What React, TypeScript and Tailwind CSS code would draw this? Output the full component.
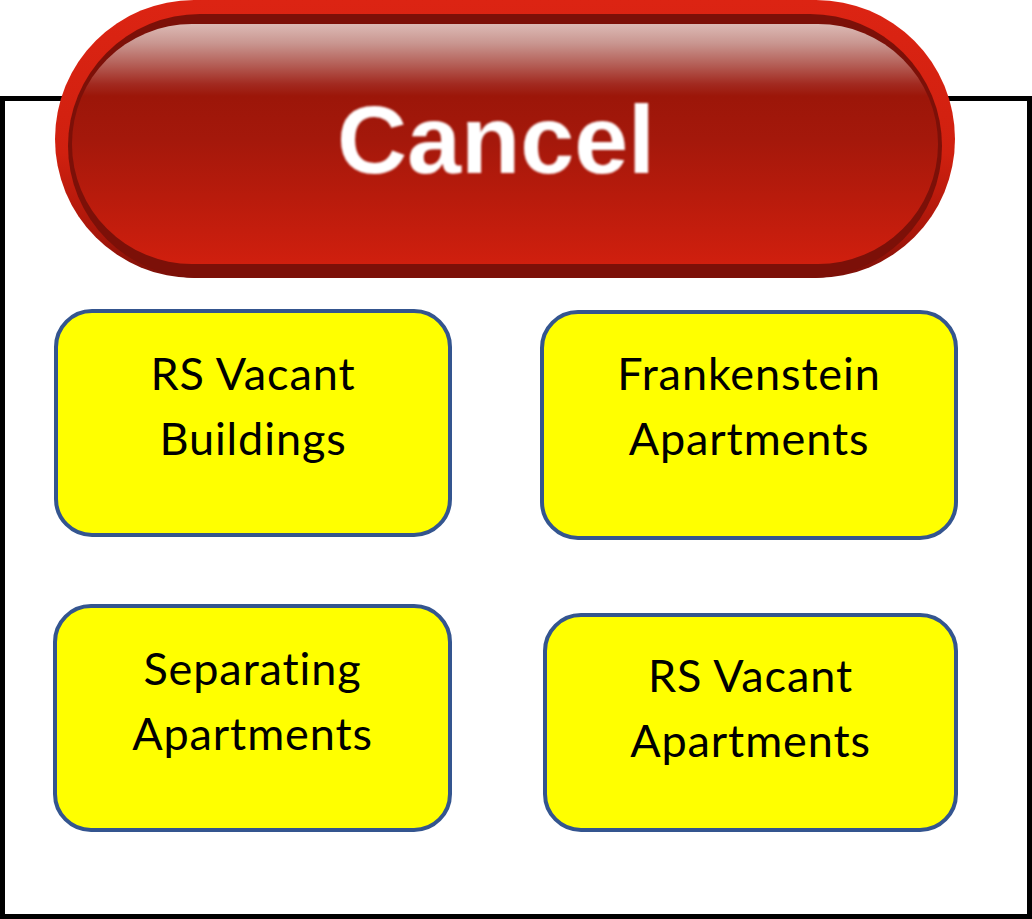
import React from "react";

function Tile({
  lines,
  className,
}: {
  lines: [string, string];
  className: string;
}) {
  return (
    <div
      className={`shrink-0 rounded-[38px] border-[4px] border-[#34558f] bg-[#ffff00] text-center text-black text-[45px] leading-[65px] tracking-[0.9px] [font-variant-ligatures:none] ${className}`}
      style={{ fontFamily: "Lato, 'Open Sans', sans-serif" }}
    >
      <div>{lines[0]}</div>
      <div>{lines[1]}</div>
    </div>
  );
}

export default function App() {
  return (
    <div className="w-[1032px] h-[919px] bg-white overflow-hidden">
      <div className="mt-[96px] h-[823px] border-[5px] border-black">
        {/* Cancel button */}
        <div className="relative z-10 -mt-[101px] ml-[50px] w-[900px] h-[278px] rounded-full bg-[linear-gradient(to_bottom,#dc2413_0%,#d0200f_55%,#a8160a_85%,#7a1008_100%)] pt-[14px] px-[13px]">
          <div className="h-[264px] rounded-full bg-[#7c1008] pt-[10px] pb-[14px] px-[4px]">
            <div className="h-full rounded-full bg-[linear-gradient(to_bottom,#dcbab5_0%,#c99690_8%,#b45e56_17%,#a22a20_25%,#9c1609_30%,#a4180b_48%,#b81b0c_72%,#d01f0e_100%)] flex items-center justify-center pr-[18px] pb-[10px]">
              <span
                className="text-white font-bold text-[97px] leading-none blur-[1px]"
                style={{ fontFamily: "'Liberation Sans', Arial, sans-serif" }}
              >
                Cancel
              </span>
            </div>
          </div>
        </div>

        {/* Row 1 */}
        <div className="mt-[31px] flex items-start">
          <Tile
            lines={["RS Vacant", "Buildings"]}
            className="ml-[49px] w-[398px] h-[228px] pt-[28px]"
          />
          <Tile
            lines={["Frankenstein", "Apartments"]}
            className="ml-[88px] mt-[1px] w-[418px] h-[230px] pt-[27px]"
          />
        </div>

        {/* Row 2 */}
        <div className="mt-[64px] flex items-start">
          <Tile
            lines={["Separating", "Apartments"]}
            className="ml-[48px] w-[399px] h-[228px] pt-[28px]"
          />
          <Tile
            lines={["RS Vacant", "Apartments"]}
            className="ml-[91px] mt-[9px] w-[415px] h-[219px] pt-[26px]"
          />
        </div>
      </div>
    </div>
  );
}
